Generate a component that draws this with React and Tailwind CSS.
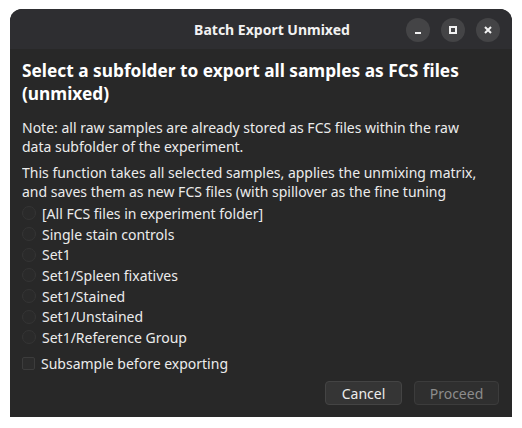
const folders = [
  '[All FCS files in experiment folder]',
  'Single stain controls',
  'Set1',
  'Set1/Spleen fixatives',
  'Set1/Stained',
  'Set1/Unstained',
  'Set1/Reference Group',
];

const WinButton = ({ children }) => (
  <div className="w-[24px] h-[24px] rounded-full bg-[#444446] flex items-center justify-center">
    <svg width="12" height="12" viewBox="0 0 12 12" fill="none" stroke="#f2f2f2" strokeWidth="2">
      {children}
    </svg>
  </div>
);

const App = () => {
  return (
    <div
      className="w-[522px] h-[428px] bg-white pt-[9px] pl-[10px]"
      style={{ fontFamily: '"Noto Sans", "Open Sans", sans-serif' }}
    >
      <div className="w-[502px] h-[408px] rounded-t-[12px] overflow-hidden bg-[#282828] flex flex-col">
        {/* Title bar */}
        <div className="h-[40px] bg-[#2e2e31] flex items-center relative shrink-0">
          <div className="flex-1 text-center text-[14px] font-bold text-[#f2f2f2] pl-[22px]">Batch Export Unmixed</div>
          <div className="absolute right-[12px] top-[9px] flex gap-[11px]">
            <WinButton><path d="M3 9h6" strokeWidth="2.2" /></WinButton>
            <WinButton><rect x="3" y="3" width="6" height="6" /></WinButton>
            <WinButton><path d="M3 3l6 6M9 3l-6 6" /></WinButton>
          </div>
        </div>

        {/* Body */}
        <div className="flex-1 flex flex-col px-[12px] text-[#ececec]">
          <h1 className="mt-[10px] text-[17.3px] leading-[23px] font-bold text-white">
            Select a subfolder to export all samples as FCS files
            <br />
            (unmixed)
          </h1>
          <p className="mt-[13px] text-[14px] leading-[19px] whitespace-nowrap">
            Note: all raw samples are already stored as FCS files within the raw
            <br />
            data subfolder of the experiment.
          </p>
          <p className="mt-[7px] text-[14px] leading-[19px] whitespace-nowrap overflow-hidden">
            This function takes all selected samples, applies the unmixing matrix,
            <br />
            and saves them as new FCS files (with spillover as the fine tuning
          </p>

          <div className="mt-[2px] flex flex-col">
            {folders.map((f) => (
              <label key={f} className="h-[20.7px] flex items-center gap-[6px] text-[14px]">
                <span className="w-[14px] h-[14px] rounded-full border border-[#353535] bg-[#2a2a2a] shrink-0" />
                <span>{f}</span>
              </label>
            ))}
          </div>

          <label className="mt-[6px] h-[20px] flex items-center gap-[6px] text-[14px]">
            <span className="w-[13px] h-[13px] rounded-[2px] border border-[#3c3c3c] bg-[#2c2c2c] shrink-0" />
            <span>Subsample before exporting</span>
          </label>

          <div className="mt-auto mb-[12px] flex justify-end gap-[12px] pr-[1px]">
            <button className="w-[77px] h-[24px] rounded-[4px] border border-[#444] bg-[#353535] text-[14px] text-[#ececec]">
              Cancel
            </button>
            <button className="w-[85px] h-[24px] rounded-[4px] border border-[#3c3c3c] bg-[#2f2f2f] text-[14px] text-[#8c8c8c]">
              Proceed
            </button>
          </div>
        </div>
      </div>
    </div>
  );
};

export default App;
